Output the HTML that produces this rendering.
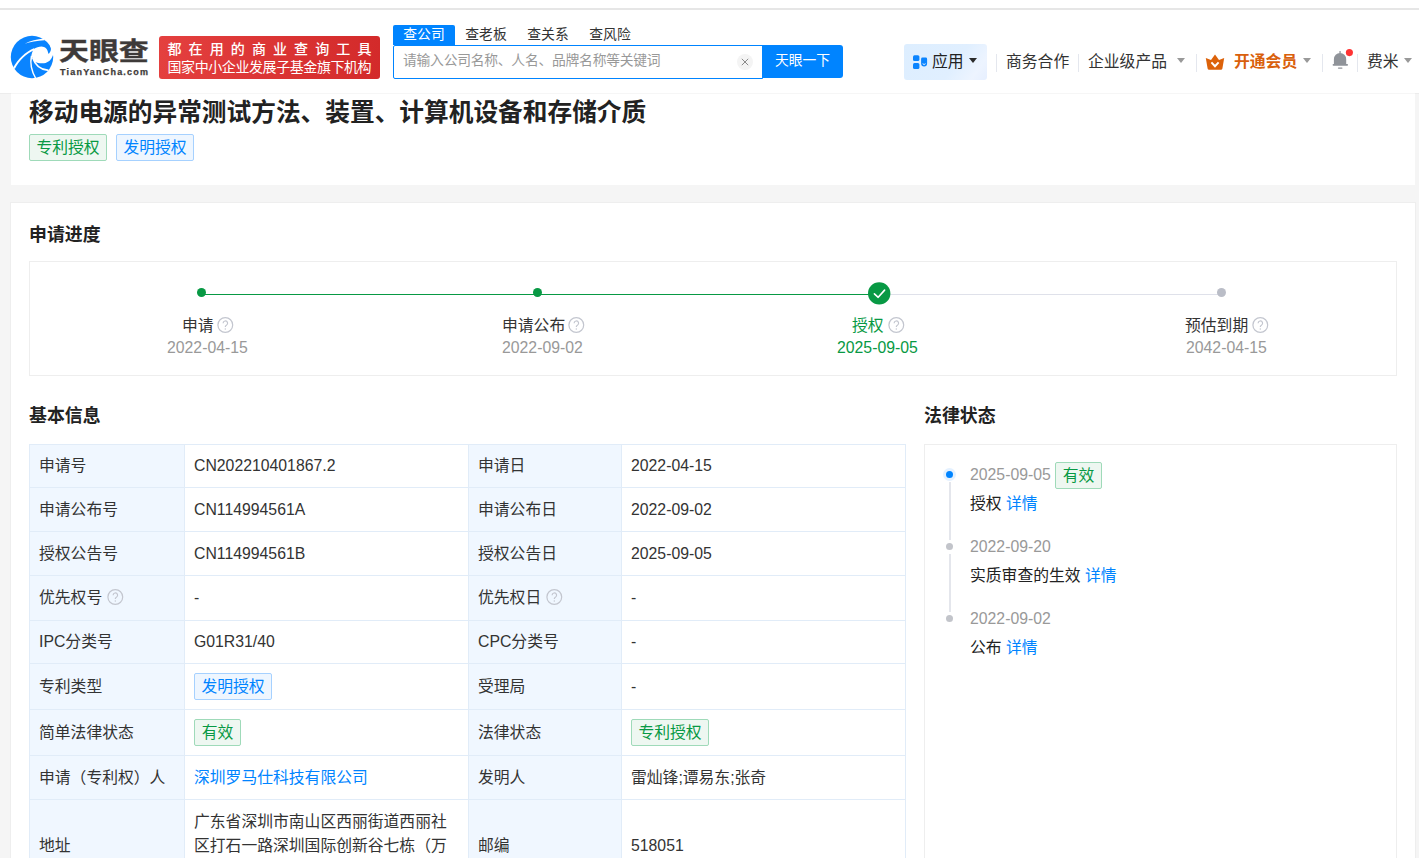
<!DOCTYPE html>
<html lang="zh-CN">
<head>
<meta charset="utf-8">
<title>移动电源的异常测试方法、装置、计算机设备和存储介质 - 天眼查</title>
<style>
*{box-sizing:border-box;margin:0;padding:0}
html,body{width:1419px;height:858px;overflow:hidden;background:#f5f5f5}
body{font-family:"Liberation Sans","Noto Sans CJK SC",sans-serif;font-size:15.8px;color:#333;position:relative}
.abs{position:absolute}
.t{position:absolute;white-space:nowrap;line-height:20px;height:20px}
a{color:#0084ff;text-decoration:none}

/* header */
#hd{position:absolute;left:0;top:0;width:1419px;height:93px;background:#fff}
#hdline{position:absolute;left:0;top:93px;width:1419px;height:1px;background:rgba(0,0,0,.035);z-index:5}
#topline{position:absolute;left:0;top:8px;width:1419px;height:2px;background:#e6e6e6}
#slogan{position:absolute;left:159px;top:36px;width:221px;height:43px;border-radius:3px;background:linear-gradient(90deg,#e4403f,#d32a2a);color:#fff}
#slogan .l1{position:absolute;left:8.5px;top:4.5px;font-size:14px;font-weight:500;letter-spacing:7.1px;line-height:16px;white-space:nowrap}
#slogan .l2{position:absolute;left:8.5px;top:21.5px;font-size:14px;letter-spacing:-0.42px;line-height:18px;white-space:nowrap}
.tab{position:absolute;top:25px;height:20px;line-height:19px;font-size:13.8px;color:#333;white-space:nowrap;width:62px;text-align:center}
#tab1{left:393px;background:#0084ff;color:#fff;text-align:center;border-radius:2px 2px 0 0}
#sbox{position:absolute;left:393px;top:45px;width:370px;height:34px;border:1px solid #0084ff;border-radius:2px 0 0 2px;background:#fff}
#sbox .ph{position:absolute;left:9px;top:5px;font-size:13.8px;color:#999;letter-spacing:-0.25px;line-height:20px;white-space:nowrap}
#sbox .clr{position:absolute;left:343px;top:8px;width:16px;height:16px;border-radius:50%;background:#f4f4f4}
#sbtn{position:absolute;left:762px;top:45px;width:81px;height:33px;background:#0084ff;color:#fff;font-size:13.8px;line-height:32px;text-align:center;border-radius:0 3px 3px 0}
#app{position:absolute;left:904px;top:44px;width:83px;height:36px;background:linear-gradient(125deg,#ddeeff 0%,#e0efff 60%,#edf4ff 85%,#e6efff 100%);border-radius:3px}
.nav{position:absolute;top:50px;height:24px;line-height:24px;font-size:15.8px;color:#333;white-space:nowrap}
.sep{position:absolute;top:54px;width:1px;height:18px;background:#e4e7ee}
.caret{position:absolute;width:0;height:0;border-left:4px solid transparent;border-right:4px solid transparent;border-top:5px solid #999}

/* cards */
#c1{position:absolute;left:11px;top:93px;width:1404px;height:92px;background:#fff}
#c2{position:absolute;left:10px;top:202px;width:1406px;height:700px;background:#fff;border:1px solid #eee}
#title{position:absolute;left:29px;top:96.5px;font-size:24.7px;font-weight:bold;line-height:32px;color:#222;white-space:nowrap}
.tag{position:absolute;height:27px;border:1px solid;border-radius:2px;font-size:15.8px;line-height:25px;text-align:center;white-space:nowrap;padding:0 6.4px}
.tg{color:#089944;background:#eef7f1;border-color:#9fdab9}
.tb{color:#0084ff;background:#eef6ff;border-color:#a6d1ff}
.h2{position:absolute;font-size:17.9px;font-weight:bold;line-height:24px;color:#222;white-space:nowrap}

#prog{position:absolute;left:29px;top:261px;width:1368px;height:115px;border:1px solid #eee;background:#fff}
.dot{position:absolute;width:9px;height:9px;border-radius:50%;background:#089944}
.plabel{position:absolute;font-size:15.8px;line-height:20px;color:#333;white-space:nowrap}
.pdate{position:absolute;font-size:15.8px;line-height:20px;color:#999;white-space:nowrap}
.q{position:absolute}

/* table */
#tbl{position:absolute;left:29px;top:444px;width:876px;border-collapse:collapse;table-layout:fixed}
#tbl td{border:1px solid #e1ecf8;padding:0 0 0 9px;font-size:15.8px;line-height:22px;vertical-align:middle;color:#333;position:relative}
#tbl td.k{background:#f0f7ff}
#tbl td.v{background:#fff}
.itag{display:inline-block;height:27px;padding:0 6.4px;border-width:1px;border-style:solid;border-radius:2px;font-size:15.8px;line-height:25px;vertical-align:middle;min-width:47px;text-align:center}

/* law */
#law{position:absolute;left:924px;top:444px;width:473px;height:500px;border:1px solid #eee;background:#fff}
.ldate{position:absolute;left:970px;font-size:15.8px;line-height:20px;color:#999;white-space:nowrap}
.ltxt{position:absolute;left:970px;font-size:15.8px;line-height:20px;color:#222;white-space:nowrap}
.ldot{position:absolute;left:946px;width:7px;height:7px;border-radius:50%;background:#c2c4ca}
.lline{position:absolute;left:949px;width:2px;background:#e4e6ec}
</style>
</head>
<body>

<!-- header -->
<div id="hd"></div>
<div id="topline"></div>
<div id="hdline"></div>

<!-- logo -->
<svg class="abs" style="left:6px;top:30px" width="52" height="54" viewBox="0 0 52 54">
  <circle cx="26" cy="27" r="21.2" fill="#0a84ff"/>
  <path d="M18.7 13.8 C24 11 31 9.1 38.2 8.6 L38.6 10.2 C31 10.5 24 12.1 18.7 13.8 Z" fill="#fff"/>
  <path d="M7.2 37.6 C12 29.3 19 22.1 27.9 18.3 L28.4 20 C20.2 23.4 13.4 30.2 8.8 39 Z" fill="#fff"/>
  <path d="M27.7 18.9 C30 17.5 33 16.4 35.5 16.4 C39 16.5 41.8 18.8 42.3 23.4 L42.9 23.8 C44.4 22 45.3 20 44.8 17.8 L44.2 16 L49 15 L50 25.2 L46.9 25.2 C45.5 29.5 42.5 32.6 38 33.2 C34.5 33.6 31.5 33 29 32 C28 30.5 27 29 26.4 27.4 L25.2 26.6 C25.6 23.5 26.5 21 27.7 18.9 Z" fill="#fff"/>
  <path d="M25.5 26 C23.9 33 25.5 41 29.8 48.5" stroke="#fff" stroke-width="1.5" fill="none"/>
  <path d="M26.6 27.4 C28.5 33.5 33.5 39.5 42.5 40.4" stroke="#fff" stroke-width="1.6" fill="none"/>
</svg>
<div class="abs" id="logoname" style="left:59px;top:32px;font-size:25px;line-height:38px;font-weight:bold;color:#3e3a39;-webkit-text-stroke:0.4px #3e3a39;white-space:nowrap;transform:scaleX(1.195);transform-origin:0 0">天眼查</div>
<div class="abs" id="logosub" style="left:60px;top:64.5px;font-size:9px;line-height:14px;font-weight:bold;color:#3e3a39;-webkit-text-stroke:0.25px #3e3a39;white-space:nowrap;letter-spacing:1.2px">TianYanCha.com</div>

<div id="slogan"><div class="l1">都在用的商业查询工具</div><div class="l2">国家中小企业发展子基金旗下机构</div></div>

<!-- search -->
<div class="tab" id="tab1">查公司</div>
<div class="tab" style="left:455px">查老板</div>
<div class="tab" style="left:517px">查关系</div>
<div class="tab" style="left:579px">查风险</div>
<div id="sbox"><div class="ph">请输入公司名称、人名、品牌名称等关键词</div>
  <div class="clr"><svg width="16" height="16" viewBox="0 0 16 16" style="display:block"><path d="M4.8 4.8 L11.2 11.2 M11.2 4.8 L4.8 11.2" stroke="#8a8a8a" stroke-width="1" fill="none"/></svg></div>
</div>
<div id="sbtn">天眼一下</div>

<!-- nav -->
<div id="app"></div>
<svg class="abs" style="left:912px;top:54px" width="16" height="16" viewBox="0 0 16 16">
  <rect x="1" y="1.2" width="6.4" height="5.9" rx="1.5" fill="#0a84ff"/>
  <rect x="1" y="8.9" width="6.4" height="6" rx="1.5" fill="#0a84ff"/>
  <path d="M9.1 5 Q9.1 3.6 10.5 3.6 H13.7 Q15.1 3.6 15.1 5 V9.6 A3 3 0 0 1 9.1 9.6 Z" fill="#0a84ff"/>
  <path d="M10.9 10 Q12.1 11.3 13.3 10" stroke="#fff" stroke-width="0.9" fill="none" stroke-linecap="round"/>
</svg>
<div class="nav" style="left:932px;color:#222">应用</div>
<div class="caret" style="left:969px;top:58.4px;border-top-color:#2b2b2b"></div>
<div class="sep" style="left:996px"></div>
<div class="nav" style="left:1006px">商务合作</div>
<div class="sep" style="left:1078px"></div>
<div class="nav" style="left:1088px">企业级产品</div>
<div class="caret" style="left:1176.5px;top:58.4px"></div>
<div class="sep" style="left:1196px"></div>
<svg class="abs" style="left:1205px;top:53px" width="20" height="18" viewBox="0 0 20 18">
  <path d="M0.8 5 L6 7 L10 1.5 L14 7 L19.2 5 L17.4 15.4 Q17.2 16.7 15.9 16.7 H4.1 Q2.8 16.7 2.6 15.4 Z" fill="#dc620a"/>
  <path d="M6.4 9.4 L10 13.2 L13.6 9.4" stroke="#fff" stroke-width="2" fill="none" stroke-linecap="butt" stroke-linejoin="miter"/>
</svg>
<div class="nav" style="left:1234px;color:#d9600c;font-weight:bold">开通会员</div>
<div class="caret" style="left:1303px;top:58.4px"></div>
<div class="sep" style="left:1322px"></div>
<svg class="abs" style="left:1331px;top:49px" width="24" height="22" viewBox="0 0 24 22">
  <rect x="8.4" y="2" width="1.3" height="2.6" rx="0.6" fill="#8f9399"/>
  <path d="M2.9 15.2 V10.2 A6.15 6.3 0 0 1 15.2 10.2 V15.2 Z" fill="#8f9399"/>
  <rect x="1.6" y="15" width="15.4" height="1.7" rx="0.8" fill="#8f9399"/>
  <rect x="6.9" y="18.4" width="4.6" height="1.3" rx="0.6" fill="#8f9399"/>
  <circle cx="18.4" cy="3.6" r="3.55" fill="#ff3333"/>
</svg>
<div class="sep" style="left:1357px"></div>
<div class="nav" style="left:1367px">费米</div>
<div class="caret" style="left:1404px;top:58.4px"></div>

<!-- title card -->
<div id="c1"></div>
<div id="title">移动电源的异常测试方法、装置、计算机设备和存储介质</div>
<div class="tag tg" style="left:29px;top:134px">专利授权</div>
<div class="tag tb" style="left:116px;top:134px">发明授权</div>

<!-- main card -->
<div id="c2"></div>
<div class="h2" style="left:29px;top:223px">申请进度</div>
<div id="prog"></div>
<div class="abs" style="left:201px;top:294px;width:677px;height:1px;background:#089944"></div>
<div class="abs" style="left:878px;top:294px;width:343px;height:1px;background:#dfe1ea"></div>
<div class="dot" style="left:197px;top:288px"></div>
<div class="dot" style="left:533px;top:288px"></div>
<div class="dot" style="left:1217px;top:288px;background:#babdc7"></div>
<svg class="abs" style="left:868px;top:282px" width="23" height="23" viewBox="0 0 23 23"><circle cx="11.2" cy="11.4" r="11.2" fill="#089944"/><path d="M6.4 11.9 L10.2 15.3 L16.6 8.1" stroke="#fff" stroke-width="1.6" fill="none" stroke-linecap="round" stroke-linejoin="round"/></svg>

<div class="plabel" style="left:182px;top:316px">申请</div>
<div class="plabel" style="left:502px;top:316px">申请公布</div>
<div class="plabel" style="left:852px;top:316px;color:#089944">授权</div>
<div class="plabel" style="left:1185px;top:316px">预估到期</div>
<svg class="q" style="left:217px;top:317px" width="17" height="17" viewBox="0 0 17 17"><circle cx="8.3" cy="8" r="7.4" fill="none" stroke="#c3c6cf" stroke-width="1.2"/><path d="M6.1 6.3 A2.25 2.25 0 1 1 9.4 8.2 C8.6 8.7 8.3 9.1 8.3 10" fill="none" stroke="#c3c6cf" stroke-width="1.2"/><circle cx="8.3" cy="11.9" r="0.75" fill="#c6c9d2"/></svg>
<svg class="q" style="left:568px;top:317px" width="17" height="17" viewBox="0 0 17 17"><circle cx="8.3" cy="8" r="7.4" fill="none" stroke="#c3c6cf" stroke-width="1.2"/><path d="M6.1 6.3 A2.25 2.25 0 1 1 9.4 8.2 C8.6 8.7 8.3 9.1 8.3 10" fill="none" stroke="#c3c6cf" stroke-width="1.2"/><circle cx="8.3" cy="11.9" r="0.75" fill="#c6c9d2"/></svg>
<svg class="q" style="left:888px;top:317px" width="17" height="17" viewBox="0 0 17 17"><circle cx="8.3" cy="8" r="7.4" fill="none" stroke="#c3c6cf" stroke-width="1.2"/><path d="M6.1 6.3 A2.25 2.25 0 1 1 9.4 8.2 C8.6 8.7 8.3 9.1 8.3 10" fill="none" stroke="#c3c6cf" stroke-width="1.2"/><circle cx="8.3" cy="11.9" r="0.75" fill="#c6c9d2"/></svg>
<svg class="q" style="left:1252px;top:317px" width="17" height="17" viewBox="0 0 17 17"><circle cx="8.3" cy="8" r="7.4" fill="none" stroke="#c3c6cf" stroke-width="1.2"/><path d="M6.1 6.3 A2.25 2.25 0 1 1 9.4 8.2 C8.6 8.7 8.3 9.1 8.3 10" fill="none" stroke="#c3c6cf" stroke-width="1.2"/><circle cx="8.3" cy="11.9" r="0.75" fill="#c6c9d2"/></svg>
<div class="pdate" style="left:167px;top:338px">2022-04-15</div>
<div class="pdate" style="left:502px;top:338px">2022-09-02</div>
<div class="pdate" style="left:837px;top:338px;color:#089944">2025-09-05</div>
<div class="pdate" style="left:1186px;top:338px">2042-04-15</div>

<div class="h2" style="left:29px;top:404px">基本信息</div>
<div class="h2" style="left:924px;top:404px">法律状态</div>

<table id="tbl">
<colgroup><col style="width:155px"><col style="width:284px"><col style="width:153px"><col style="width:284px"></colgroup>
<tr style="height:43px"><td class="k">申请号</td><td class="v n">CN202210401867.2</td><td class="k">申请日</td><td class="v n">2022-04-15</td></tr>
<tr style="height:44px"><td class="k">申请公布号</td><td class="v n">CN114994561A</td><td class="k">申请公布日</td><td class="v n">2022-09-02</td></tr>
<tr style="height:44px"><td class="k">授权公告号</td><td class="v n">CN114994561B</td><td class="k">授权公告日</td><td class="v n">2025-09-05</td></tr>
<tr style="height:45px"><td class="k">优先权号<svg style="position:absolute;left:77px;top:13px" width="17" height="17" viewBox="0 0 17 17"><circle cx="8.3" cy="8" r="7.4" fill="none" stroke="#c3c6cf" stroke-width="1.2"/><path d="M6.1 6.3 A2.25 2.25 0 1 1 9.4 8.2 C8.6 8.7 8.3 9.1 8.3 10" fill="none" stroke="#c3c6cf" stroke-width="1.2"/><circle cx="8.3" cy="11.9" r="0.75" fill="#c6c9d2"/></svg></td><td class="v">-</td><td class="k">优先权日<svg style="position:absolute;left:77px;top:13px" width="17" height="17" viewBox="0 0 17 17"><circle cx="8.3" cy="8" r="7.4" fill="none" stroke="#c3c6cf" stroke-width="1.2"/><path d="M6.1 6.3 A2.25 2.25 0 1 1 9.4 8.2 C8.6 8.7 8.3 9.1 8.3 10" fill="none" stroke="#c3c6cf" stroke-width="1.2"/><circle cx="8.3" cy="11.9" r="0.75" fill="#c6c9d2"/></svg></td><td class="v">-</td></tr>
<tr style="height:43px"><td class="k">IPC分类号</td><td class="v n">G01R31/40</td><td class="k">CPC分类号</td><td class="v">-</td></tr>
<tr style="height:46px"><td class="k">专利类型</td><td class="v"><span class="itag tb">发明授权</span></td><td class="k">受理局</td><td class="v">-</td></tr>
<tr style="height:46px"><td class="k">简单法律状态</td><td class="v"><span class="itag tg">有效</span></td><td class="k">法律状态</td><td class="v"><span class="itag tg">专利授权</span></td></tr>
<tr style="height:44px"><td class="k">申请（专利权）人</td><td class="v"><a>深圳罗马仕科技有限公司</a></td><td class="k">发明人</td><td class="v">雷灿锋;谭易东;张奇</td></tr>
<tr style="height:92px"><td class="k">地址</td><td class="v" style="line-height:24px;vertical-align:top;padding-top:10px">广东省深圳市南山区西丽街道西丽社<br>区打石一路深圳国际创新谷七栋（万</td><td class="k">邮编</td><td class="v n">518051</td></tr>
</table>

<!-- law status -->
<div id="law"></div>
<div class="lline" style="top:482px;height:58px"></div>
<div class="lline" style="top:554px;height:58px"></div>
<div class="abs" style="left:943px;top:468px;width:13px;height:13px;border-radius:50%;background:#e4f1ff"></div>
<div class="ldot" style="top:471px;background:#0084ff"></div>
<div class="ldot" style="top:543px"></div>
<div class="ldot" style="top:615px"></div>
<div class="ldate" style="top:465px">2025-09-05</div>
<div class="tag tg" style="left:1055px;top:462px;width:47px;padding:0">有效</div>
<div class="ltxt" style="top:494px">授权 <a>详情</a></div>
<div class="ldate" style="top:537px">2022-09-20</div>
<div class="ltxt" style="top:566px">实质审查的生效 <a>详情</a></div>
<div class="ldate" style="top:609px">2022-09-02</div>
<div class="ltxt" style="top:638px">公布 <a>详情</a></div>

</body>
</html>
